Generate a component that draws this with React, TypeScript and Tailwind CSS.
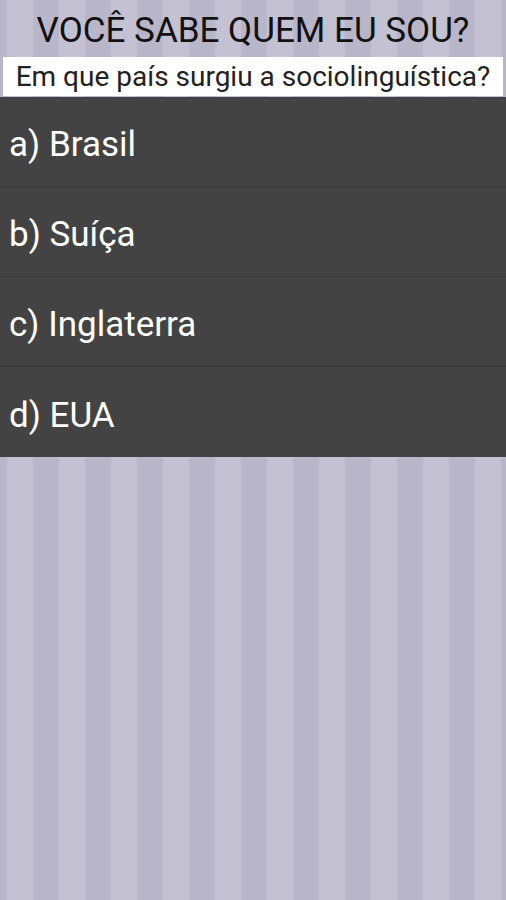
const options = ['a) Brasil', 'b) Suíça', 'c) Inglaterra', 'd) EUA'];

export default function App() {
  return (
    <div
      className="min-h-screen w-full bg-[repeating-linear-gradient(90deg,#b9b6c9_0px,#b9b6c9_7px,#c4c1d2_7px,#c4c1d2_33px,#b9b6c9_33px,#b9b6c9_52px)]"
      style={{ fontFamily: 'Roboto, "Liberation Sans", sans-serif' }}
    >
      {/* Title */}
      <h1 className="h-[57px] flex items-center justify-center pt-[4px] text-[35px] leading-none text-[#111]">
        VOCÊ SABE QUEM EU SOU?
      </h1>

      {/* Question */}
      <div className="mx-[3px] h-[39px] pt-[1px] bg-white flex items-center justify-center text-[28px] leading-none text-[#222]">
        Em que país surgiu a sociolinguística?
      </div>

      {/* Answers */}
      <ul className="mt-[1px] bg-[#434343]">
        {options.map((opt, i) => (
          <li
            key={opt}
            className={`h-[90px] flex items-center pl-[9px] pt-[6px] text-[35px] leading-none text-white ${
              i < options.length - 1 ? 'border-b border-[#373737]' : ''
            }`}
          >
            {opt}
          </li>
        ))}
      </ul>
    </div>
  );
}
